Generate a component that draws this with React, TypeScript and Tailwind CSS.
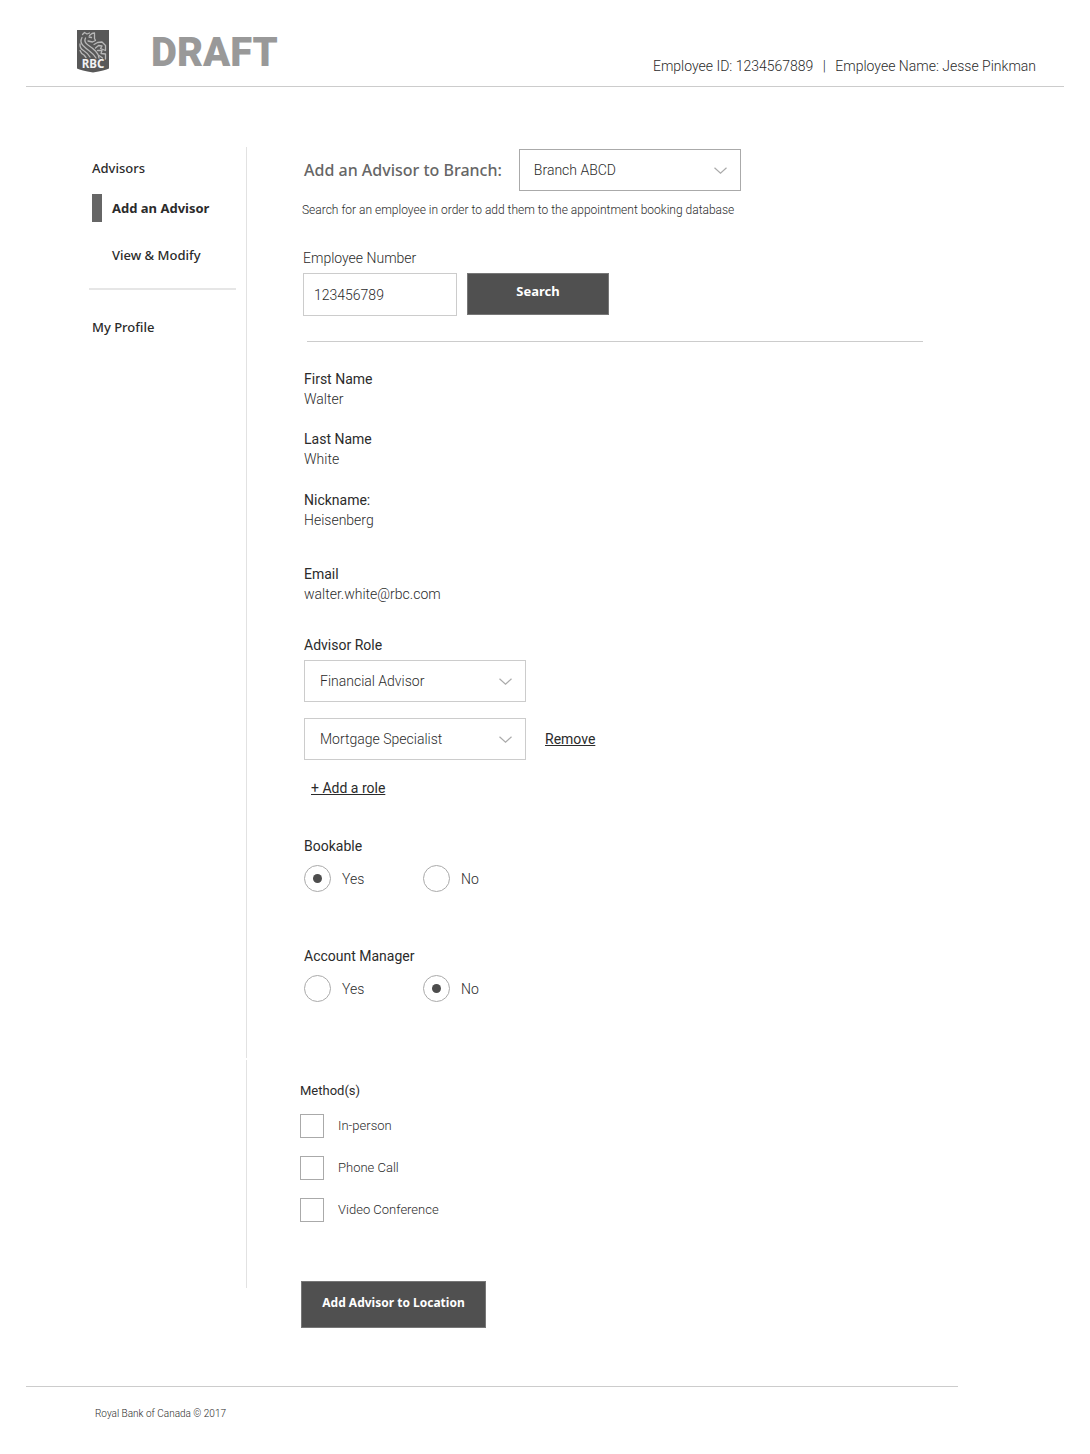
import { useState, type ReactNode } from "react"

const Logo = () => (
  <svg width="32" height="43" viewBox="0 0 32 43" role="img" aria-label="RBC">
    <path d="M0 0H32V38.500Q28 40.500 16 42.500Q4 40.500 0 38.500Z" fill="#585858" />
    <g fill="none" stroke="#b8b8b8" strokeLinecap="round" strokeLinejoin="round" strokeWidth="1.300">
      <path d="M5.500 4.500L7.500 2.500L10 4L12.500 3M12.500 5.500L15 3.500L17.500 3V8.500L18.500 10.500L15.500 12L11 11" />
      <path d="M12 7L14.500 7.500M5 7.500Q2.500 12 6 15.500T13 21.500T19 28" />
      <path d="M8.500 8Q6.500 12 11 15T18.500 21T22 28" />
      <path d="M3 14Q2.500 18 6.500 20.500T13 27M3 20.500Q4 23.500 7 25L9 27.500" />
      <path d="M17 14.500L20.500 12.500L25 12L28.500 15.500V20" />
      <path d="M18.500 18L21.500 15.500L25 16L23.500 18.500L28.500 20.500M20.500 20.500H25L24 23.500L28.500 24V29M22 25.500L25.500 28" />
    </g>
    <text x="16" y="37.500" textAnchor="middle" fill="#f2f2f2" fontSize="11.500" fontWeight="700" fontFamily="Noto Sans, sans-serif">RBC</text>
  </svg>
)

const Header = () => {
  return (
    <header className="mx-[26px] flex h-[87px] items-start justify-between border-b border-[#cccccc] pr-7 pl-[51px]">
      <div className="flex items-start gap-[42px] pt-[30px]">
        <Logo />
        <h1 className="text-[40px] leading-[46px] font-black text-[#999999]">DRAFT</h1>
      </div>
      <p className="pt-14 text-sm leading-5 font-light">
        Employee ID: 1234567889 <span className="mx-1.5">|</span> Employee Name: Jesse Pinkman
      </p>
    </header>
  )
}

const Sidebar = () => {
  return (
    <nav className="w-[246px] shrink-0 pr-2.5 pl-[89px] font-['Noto_Sans'] text-[13px] leading-5 font-medium">
      <a href="#" className="mt-[11px] ml-[3px] block">Advisors</a>
      <a href="#" className="mt-4 ml-[3px] flex h-7 items-center gap-2.5 font-bold" aria-current="page">
        <span className="h-7 w-2.5 bg-[#666666]"></span>
        Add an Advisor
      </a>
      <a href="#" className="mt-[23px] ml-[23px] block">View &amp; Modify</a>
      <hr className="mt-[23px] border-t-2 border-[#e6e6e6]" />
      <a href="#" className="mt-[27px] ml-[3px] block">My Profile</a>
    </nav>
  )
}

type DropdownProps = {
  id: string
  label: string
  options: string[]
  className: string
}

const Dropdown = ({ id, label, options, className }: DropdownProps) => {
  return (
    <div className="relative w-[222px]">
      <select id={id} aria-label={label} className={`w-full appearance-none border bg-white text-sm font-light ${className}`}>
        {options.map((option) => <option key={option}>{option}</option>)}
      </select>
      <svg className="pointer-events-none absolute top-[18px] right-3.5" width="13" height="8" viewBox="0 0 13 8" fill="none" stroke="#aaaaaa" strokeWidth="1.200">
        <path d="M0.500 0.800L6.500 6.300L12.500 0.800" />
      </svg>
    </div>
  )
}

const Detail = ({ label, value, className }: { label: string; value: string; className: string }) => (
  <div className={className}>
    <dt className="font-normal">{label}</dt>
    <dd className="font-light">{value}</dd>
  </div>
)

type YesNoProps = {
  name: string
  legend: string
  value: string
  onChange: (value: string) => void
  className: string
}

const YesNo = ({ name, legend, value, onChange, className }: YesNoProps) => {
  return (
    <fieldset className={className}>
      <legend>{legend}</legend>
      <div className="mt-[9px] flex">
        {["Yes", "No"].map((option) => (
          <label key={option} className="flex w-[119px] items-center gap-[11px] font-light">
            <input
              type="radio"
              name={name}
              checked={value === option}
              onChange={() => onChange(option)}
              className="grid size-[27px] appearance-none place-items-center rounded-full border border-[#aaaaaa] before:size-[9px] before:rounded-full checked:before:bg-[#4d4d4d]"
            />
            {option}
          </label>
        ))}
      </div>
    </fieldset>
  )
}

const Checkbox = ({ children }: { children: ReactNode }) => (
  <label className="flex items-center gap-3.5">
    <input type="checkbox" className="size-6 appearance-none border border-[#aaaaaa] checked:bg-[#4d4d4d]" />
    {children}
  </label>
)

const AdvisorForm = () => {

  const [bookable, setBookable] = useState("Yes");
  const [manager, setManager] = useState("No");

  return (
    <form className="min-w-0 flex-1 pt-0.5 pl-[53px] text-sm leading-5">
      <div className="flex items-center gap-[17px] pl-1">
        <h2 className="font-['Noto_Sans'] text-base font-medium whitespace-nowrap text-[#666666]">Add an Advisor to Branch:</h2>
        <Dropdown id="branch" label="Branch" options={["Branch ABCD"]} className="h-[42px] border-[#aaaaaa] px-3.5" />
      </div>
      <p className="mt-[9px] pl-0.5 text-xs leading-5 font-light">Search for an employee in order to add them to the appointment booking database</p>

      <label htmlFor="employee" className="mt-7 block pl-[3px] font-light">Employee Number</label>
      <div className="mt-[5px] flex gap-2.5 pl-[3px]">
        <input id="employee" type="text" defaultValue="123456789" className="h-[43px] w-[154px] border border-[#cccccc] px-2.5 font-light" />
        <button type="button" className="h-[42px] w-[142px] border border-[#777777] bg-[#505050] pb-1.5 font-['Noto_Sans'] text-[13px] font-bold text-white">Search</button>
      </div>
      <hr className="mt-[25px] ml-[7px] max-w-[616px] border-[#cccccc]" />

      <dl className="pl-1">
        <Detail label="First Name" value="Walter" className="mt-[27px]" />
        <Detail label="Last Name" value="White" className="mt-5" />
        <Detail label="Nickname:" value="Heisenberg" className="mt-[21px]" />
        <Detail label="Email" value="walter.white@rbc.com" className="mt-[34px]" />
      </dl>

      <div className="pl-1">
        <label htmlFor="role" className="mt-[31px] block">Advisor Role</label>
        <div className="mt-[5px] flex flex-col gap-4">
          <Dropdown id="role" label="Advisor Role" options={["Financial Advisor", "Mortgage Specialist"]} className="h-[42px] border-[#cccccc] px-[15px]" />
          <div className="flex items-center gap-[19px]">
            <Dropdown id="role-2" label="Second Advisor Role" options={["Mortgage Specialist", "Financial Advisor"]} className="h-[42px] border-[#cccccc] px-[15px]" />
            <button type="button" className="underline">Remove</button>
          </div>
        </div>
        <button type="button" className="mt-[18px] ml-[7px] block underline">+ Add a role</button>

        <YesNo name="bookable" legend="Bookable" value={bookable} onChange={setBookable} className="mt-[38px]" />
        <YesNo name="manager" legend="Account Manager" value={manager} onChange={setManager} className="mt-[54px]" />
      </div>

      <fieldset className="mt-[79px] text-[13px] leading-5">
        <legend>Method(s)</legend>
        <div className="mt-[13px] flex flex-col gap-[18px] font-light">
          <Checkbox>In-person</Checkbox>
          <Checkbox>Phone Call</Checkbox>
          <Checkbox>Video Conference</Checkbox>
        </div>
      </fieldset>

      <button type="button" className="mt-[59px] ml-px block h-[47px] w-[185px] border border-[#777777] bg-[#505050] pb-[3px] font-['Noto_Sans'] text-xs font-bold text-white">Add Advisor to Location</button>
    </form>
  )
}

const App = () => {
  return (
    <div className="min-h-screen bg-white font-[Roboto,sans-serif] text-[#2b2b2b]">
      <Header />
      <main className="mt-[60px] flex">
        <Sidebar />
        <div className="mb-10 flex w-px flex-col gap-0.5">
          <div className="flex-4 bg-[#e2e2e2]"></div>
          <div className="flex-1 bg-[#e2e2e2]"></div>
        </div>
        <AdvisorForm />
      </main>
      <footer className="mt-[58px] mr-[132px] ml-[26px] border-t border-[#cccccc] pt-[17px] pb-6 pl-[69px]">
        <p className="text-[10px] leading-5 font-light">Royal Bank of Canada © 2017</p>
      </footer>
    </div>
  )
}

export default App
